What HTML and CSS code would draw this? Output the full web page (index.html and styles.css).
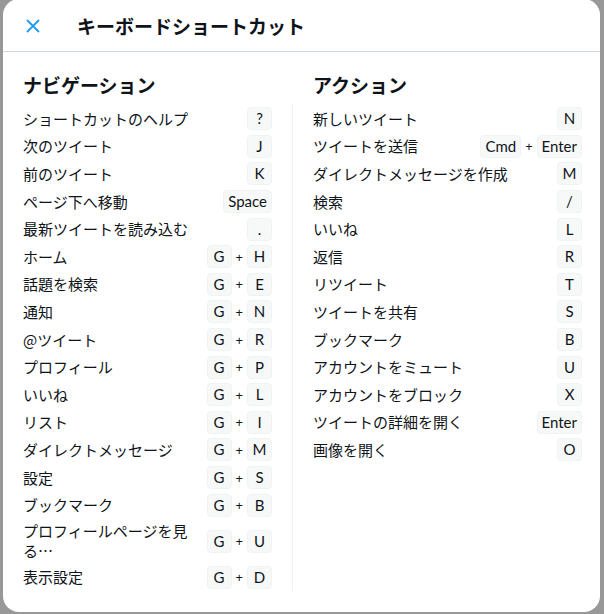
FILE: index.html
```html
<!DOCTYPE html>
<html lang="ja">
    <head>
        <meta charset="UTF-8" />
        <meta name="viewport" content="width=device-width, initial-scale=1.0" />
        <title>キーボードショートカット</title>
        <link rel="stylesheet" href="styles.css">
    </head>
    <body>
        <div class="modal">
            <div class="modal-header">
                <button class="close-btn" type="button" aria-label="閉じる">
                    <svg width="14" height="14" viewBox="0 0 14 14">
                        <path d="M1 1 L13 13 M13 1 L1 13" />
                    </svg>
                </button>
                <h1 class="title">キーボードショートカット</h1>
            </div>

            <div class="columns">
                <section class="group group-nav">
                    <h2>ナビゲーション</h2>
                    <ul class="shortcuts">
                        <li class="row"><span class="label">ショートカットのヘルプ</span><span class="keys"><kbd>?</kbd></span></li>
                        <li class="row"><span class="label">次のツイート</span><span class="keys"><kbd>J</kbd></span></li>
                        <li class="row"><span class="label">前のツイート</span><span class="keys"><kbd>K</kbd></span></li>
                        <li class="row"><span class="label">ページ下へ移動</span><span class="keys"><kbd>Space</kbd></span></li>
                        <li class="row"><span class="label">最新ツイートを読み込む</span><span class="keys"><kbd>.</kbd></span></li>
                        <li class="row"><span class="label">ホーム</span><span class="keys"><kbd>G</kbd><span class="plus">+</span><kbd>H</kbd></span></li>
                        <li class="row"><span class="label">話題を検索</span><span class="keys"><kbd>G</kbd><span class="plus">+</span><kbd>E</kbd></span></li>
                        <li class="row"><span class="label">通知</span><span class="keys"><kbd>G</kbd><span class="plus">+</span><kbd>N</kbd></span></li>
                        <li class="row"><span class="label">@ツイート</span><span class="keys"><kbd>G</kbd><span class="plus">+</span><kbd>R</kbd></span></li>
                        <li class="row"><span class="label">プロフィール</span><span class="keys"><kbd>G</kbd><span class="plus">+</span><kbd>P</kbd></span></li>
                        <li class="row"><span class="label">いいね</span><span class="keys"><kbd>G</kbd><span class="plus">+</span><kbd>L</kbd></span></li>
                        <li class="row"><span class="label">リスト</span><span class="keys"><kbd>G</kbd><span class="plus">+</span><kbd>I</kbd></span></li>
                        <li class="row"><span class="label">ダイレクトメッセージ</span><span class="keys"><kbd>G</kbd><span class="plus">+</span><kbd>M</kbd></span></li>
                        <li class="row"><span class="label">設定</span><span class="keys"><kbd>G</kbd><span class="plus">+</span><kbd>S</kbd></span></li>
                        <li class="row"><span class="label">ブックマーク</span><span class="keys"><kbd>G</kbd><span class="plus">+</span><kbd>B</kbd></span></li>
                        <li class="row"><span class="label">プロフィールページを見る…</span><span class="keys"><kbd>G</kbd><span class="plus">+</span><kbd>U</kbd></span></li>
                        <li class="row"><span class="label">表示設定</span><span class="keys"><kbd>G</kbd><span class="plus">+</span><kbd>D</kbd></span></li>
                    </ul>
                </section>

                <section class="group group-actions">
                    <h2>アクション</h2>
                    <ul class="shortcuts">
                        <li class="row"><span class="label">新しいツイート</span><span class="keys"><kbd>N</kbd></span></li>
                        <li class="row"><span class="label">ツイートを送信</span><span class="keys"><kbd>Cmd</kbd><span class="plus">+</span><kbd>Enter</kbd></span></li>
                        <li class="row"><span class="label">ダイレクトメッセージを作成</span><span class="keys"><kbd>M</kbd></span></li>
                        <li class="row"><span class="label">検索</span><span class="keys"><kbd>/</kbd></span></li>
                        <li class="row"><span class="label">いいね</span><span class="keys"><kbd>L</kbd></span></li>
                        <li class="row"><span class="label">返信</span><span class="keys"><kbd>R</kbd></span></li>
                        <li class="row"><span class="label">リツイート</span><span class="keys"><kbd>T</kbd></span></li>
                        <li class="row"><span class="label">ツイートを共有</span><span class="keys"><kbd>S</kbd></span></li>
                        <li class="row"><span class="label">ブックマーク</span><span class="keys"><kbd>B</kbd></span></li>
                        <li class="row"><span class="label">アカウントをミュート</span><span class="keys"><kbd>U</kbd></span></li>
                        <li class="row"><span class="label">アカウントをブロック</span><span class="keys"><kbd>X</kbd></span></li>
                        <li class="row"><span class="label">ツイートの詳細を開く</span><span class="keys"><kbd>Enter</kbd></span></li>
                        <li class="row"><span class="label">画像を開く</span><span class="keys"><kbd>O</kbd></span></li>
                    </ul>
                </section>
            </div>
        </div>
    </body>
</html>
```

FILE: styles.css
```css
body {
    margin: 0;
    background-color: #989898;
    font-family: "Noto Sans CJK JP", "Noto Sans", sans-serif;
    color: #0f1419;
}
.modal {
    margin: -1px 4px 0 3px;
    height: 613px;
    background-color: #fff;
    border-radius: 16px;
    overflow: hidden;
}
.modal-header {
    display: flex;
    align-items: center;
    height: 53px;
    padding-top: 2px;
    box-sizing: border-box;
    border-bottom: 1px solid #cfd9de;
}
.close-btn {
    display: flex;
    align-items: center;
    justify-content: center;
    width: 36px;
    height: 36px;
    margin-left: 12px;
    padding: 0;
    border: none;
    background: none;
    cursor: pointer;
}
.close-btn path {
    stroke: #1d9bf0;
    stroke-width: 1.8;
    fill: none;
}
.title {
    margin: 0 0 0 26px;
    font-size: 19px;
    line-height: 24px;
    font-weight: bold;
}
.columns {
    display: grid;
    grid-template-columns: 270px 1fr;
    padding: 21px 18px 0 20px;
}
.group h2 {
    margin: 0 0 7px;
    font-size: 19px;
    line-height: 24px;
    font-weight: bold;
}
.group-actions {
    padding-left: 20px;
}
.shortcuts {
    list-style: none;
    margin: 0;
    padding: 1px 0 0;
}
.group-nav .shortcuts {
    padding-right: 20px;
    border-right: 1px solid #eff3f4;
}
.row {
    display: flex;
    align-items: center;
    justify-content: space-between;
    gap: 8px;
    padding: 2.3px 0;
}
.label {
    font-size: 15px;
    line-height: 20px;
}
.keys {
    display: flex;
    align-items: center;
    gap: 4px;
    flex-shrink: 0;
}
kbd {
    box-sizing: border-box;
    min-width: 25px;
    padding: 0 4px;
    font-family: Lato, "Noto Sans", sans-serif;
    font-size: 15px;
    line-height: 21px;
    text-align: center;
    background-color: #f7f9f9;
    border: 1px solid #eff3f4;
    border-radius: 4px;
}
.plus {
    font-family: "Noto Sans", sans-serif;
    font-size: 13px;
}
```
